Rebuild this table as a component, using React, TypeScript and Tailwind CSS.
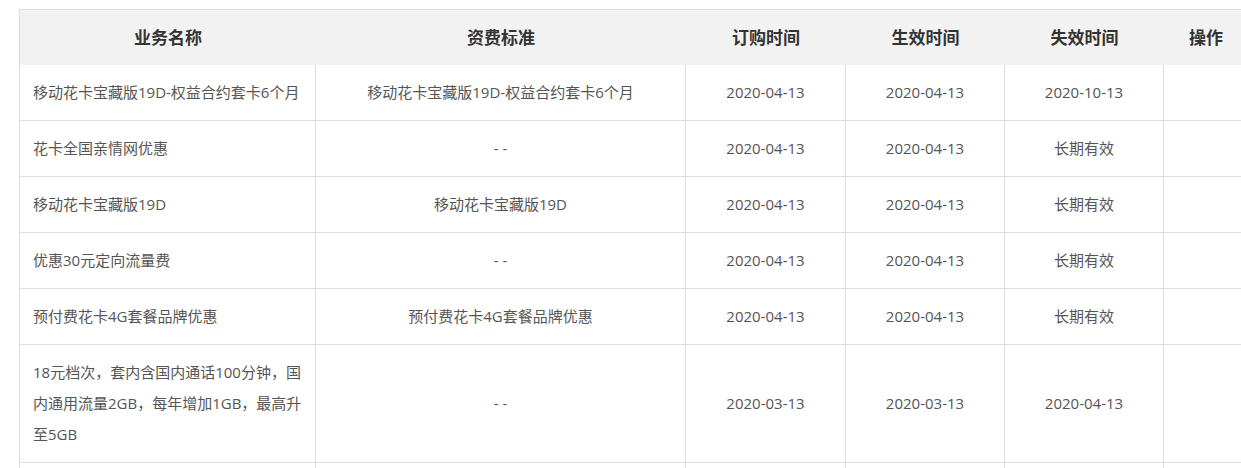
const rows = [
  { name: '移动花卡宝藏版19D-权益合约套卡6个月', fee: '移动花卡宝藏版19D-权益合约套卡6个月', order: '2020-04-13', start: '2020-04-13', end: '2020-10-13' },
  { name: '花卡全国亲情网优惠', fee: '- -', order: '2020-04-13', start: '2020-04-13', end: '长期有效' },
  { name: '移动花卡宝藏版19D', fee: '移动花卡宝藏版19D', order: '2020-04-13', start: '2020-04-13', end: '长期有效' },
  { name: '优惠30元定向流量费', fee: '- -', order: '2020-04-13', start: '2020-04-13', end: '长期有效' },
  { name: '预付费花卡4G套餐品牌优惠', fee: '预付费花卡4G套餐品牌优惠', order: '2020-04-13', start: '2020-04-13', end: '长期有效' },
  { name: '18元档次，套内含国内通话100分钟，国内通用流量2GB，每年增加1GB，最高升至5GB', fee: '- -', order: '2020-03-13', start: '2020-03-13', end: '2020-04-13' },
  { name: '', fee: '', order: '', start: '', end: '' },
]

const headers = ['业务名称', '资费标准', '订购时间', '生效时间', '失效时间', '操作']

export default function App() {
  return (
    <div
      className="w-[1241px] h-[468px] overflow-hidden bg-white pt-[9px] pl-[19px]"
      style={{ fontFamily: '"Open Sans", "Noto Sans CJK SC", sans-serif' }}
    >
      <table className="table-fixed w-[1228px] border-separate border-spacing-0 border-l border-t border-[#dddddd]">
        <colgroup>
          <col className="w-[296px]" />
          <col className="w-[370px]" />
          <col className="w-[160px]" />
          <col className="w-[159px]" />
          <col className="w-[159px]" />
          <col className="w-[84px]" />
        </colgroup>
        <thead>
          <tr>
            {headers.map(h => (
              <th
                key={h}
                className="bg-[#f2f2f2] py-3 text-center text-[17px] font-bold leading-[31px] text-[#333333]"
              >
                {h}
              </th>
            ))}
          </tr>
        </thead>
        <tbody>
          {rows.map((r, i) => (
            <tr key={i} className="text-[15px] leading-[31px] text-[#555555]">
              <td className="border-r border-b border-[#dddddd] py-3 pl-[13px] pr-[12px] text-left align-middle">
                {r.name}
              </td>
              <td className="border-r border-b border-[#dddddd] py-3 text-center align-middle">{r.fee}</td>
              <td className="border-r border-b border-[#dddddd] py-3 text-center align-middle">{r.order}</td>
              <td className="border-r border-b border-[#dddddd] py-3 text-center align-middle">{r.start}</td>
              <td className="border-r border-b border-[#dddddd] py-3 text-center align-middle">{r.end}</td>
              <td className="border-r border-b border-[#dddddd] py-3 text-center align-middle"></td>
            </tr>
          ))}
        </tbody>
      </table>
    </div>
  )
}
